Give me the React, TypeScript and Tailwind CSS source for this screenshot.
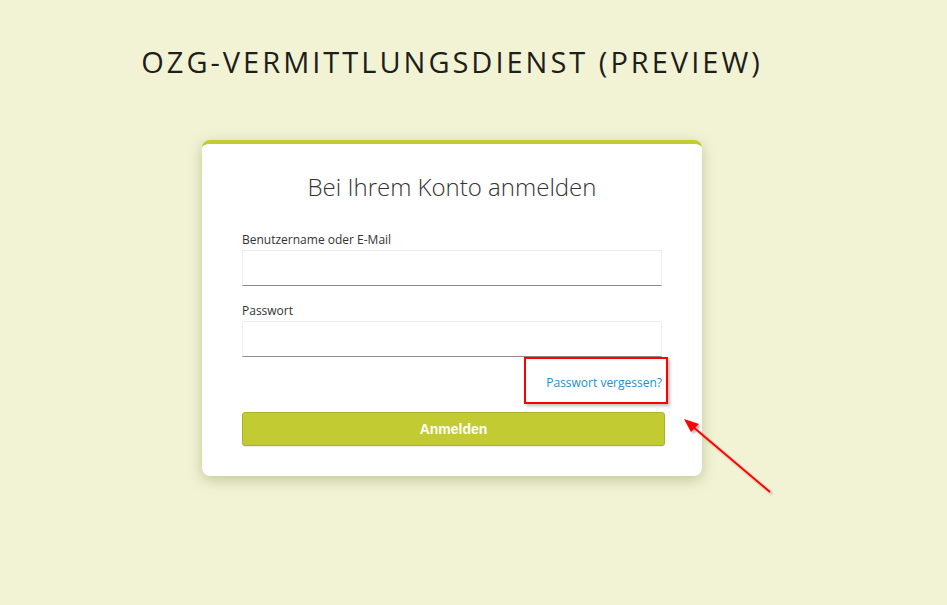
import React from "react";

const Field = ({ label, type }: { label: string; type: string }) => {
  return (
    <div className="flex flex-col">
      <label className="text-[12px] leading-[16px] text-[#333] mb-[2px]">
        {label}
      </label>
      <input
        type={type}
        className="h-[36px] w-full bg-white border border-[#eeeeee] border-b-[#8b8b8b] outline-none px-2"
      />
    </div>
  );
};

const App = () => {
  return (
    <div
      className="relative w-[947px] h-[605px] bg-[#f2f3d5] overflow-hidden"
      style={{ fontFamily: '"Open Sans", sans-serif' }}
    >
      <div className="w-[904px] flex flex-col items-center">
        <h1 className="mt-[44px] text-[29px] leading-[36px] tracking-[3px] text-[#1e1e1a] font-normal">
          OZG-VERMITTLUNGSDIENST (PREVIEW)
        </h1>

        <div className="mt-[60px] w-[500px] bg-white rounded-[8px] border-t-[4px] border-[#c2cb31] shadow-[0_4px_14px_rgba(110,115,40,0.35)] px-[40px] pt-[27px] pb-[30px]">
          <h2 className="text-center text-[24px] leading-[32px] font-light text-[#333]">
            Bei Ihrem Konto anmelden
          </h2>

          <div className="mt-[29px] flex flex-col gap-[17px]">
            <Field label="Benutzername oder E-Mail" type="text" />
            <Field label="Passwort" type="password" />
          </div>

          <div className="flex justify-end mt-[12px]">
            <div className="relative">
              <a
                href="#"
                className="text-[12px] leading-[18px] text-[#1a8fd0] no-underline"
              >
                Passwort vergessen?
              </a>
              <div className="absolute left-[-22px] top-[-12px] w-[144px] h-[47px] border-2 border-[#ff0000] shadow-[2px_2px_3px_rgba(0,0,0,0.25)]" />
            </div>
          </div>

          <button
            className="mt-[19px] w-[423px] h-[34px] rounded-[3px] bg-[#c2cb31] border border-[#aab32a] text-white text-[14px] font-bold shadow-[0_1px_1px_rgba(0,0,0,0.08)]"
            style={{ fontFamily: '"Liberation Sans", Arial, sans-serif' }}
          >
            Anmelden
          </button>
        </div>
      </div>

      <svg
        className="absolute left-0 top-0 pointer-events-none"
        width="947"
        height="605"
      >
        <defs>
          <filter id="sh" x="-20%" y="-20%" width="140%" height="140%">
            <feDropShadow dx="2" dy="2" stdDeviation="1.2" floodColor="#000" floodOpacity="0.3" />
          </filter>
        </defs>
        <g filter="url(#sh)">
          <line x1="770" y1="492" x2="692" y2="426" stroke="#ff0000" strokeWidth="2" />
          <polygon points="684,419 699,424 691,432" fill="#ff0000" />
        </g>
      </svg>
    </div>
  );
};

export default App;
